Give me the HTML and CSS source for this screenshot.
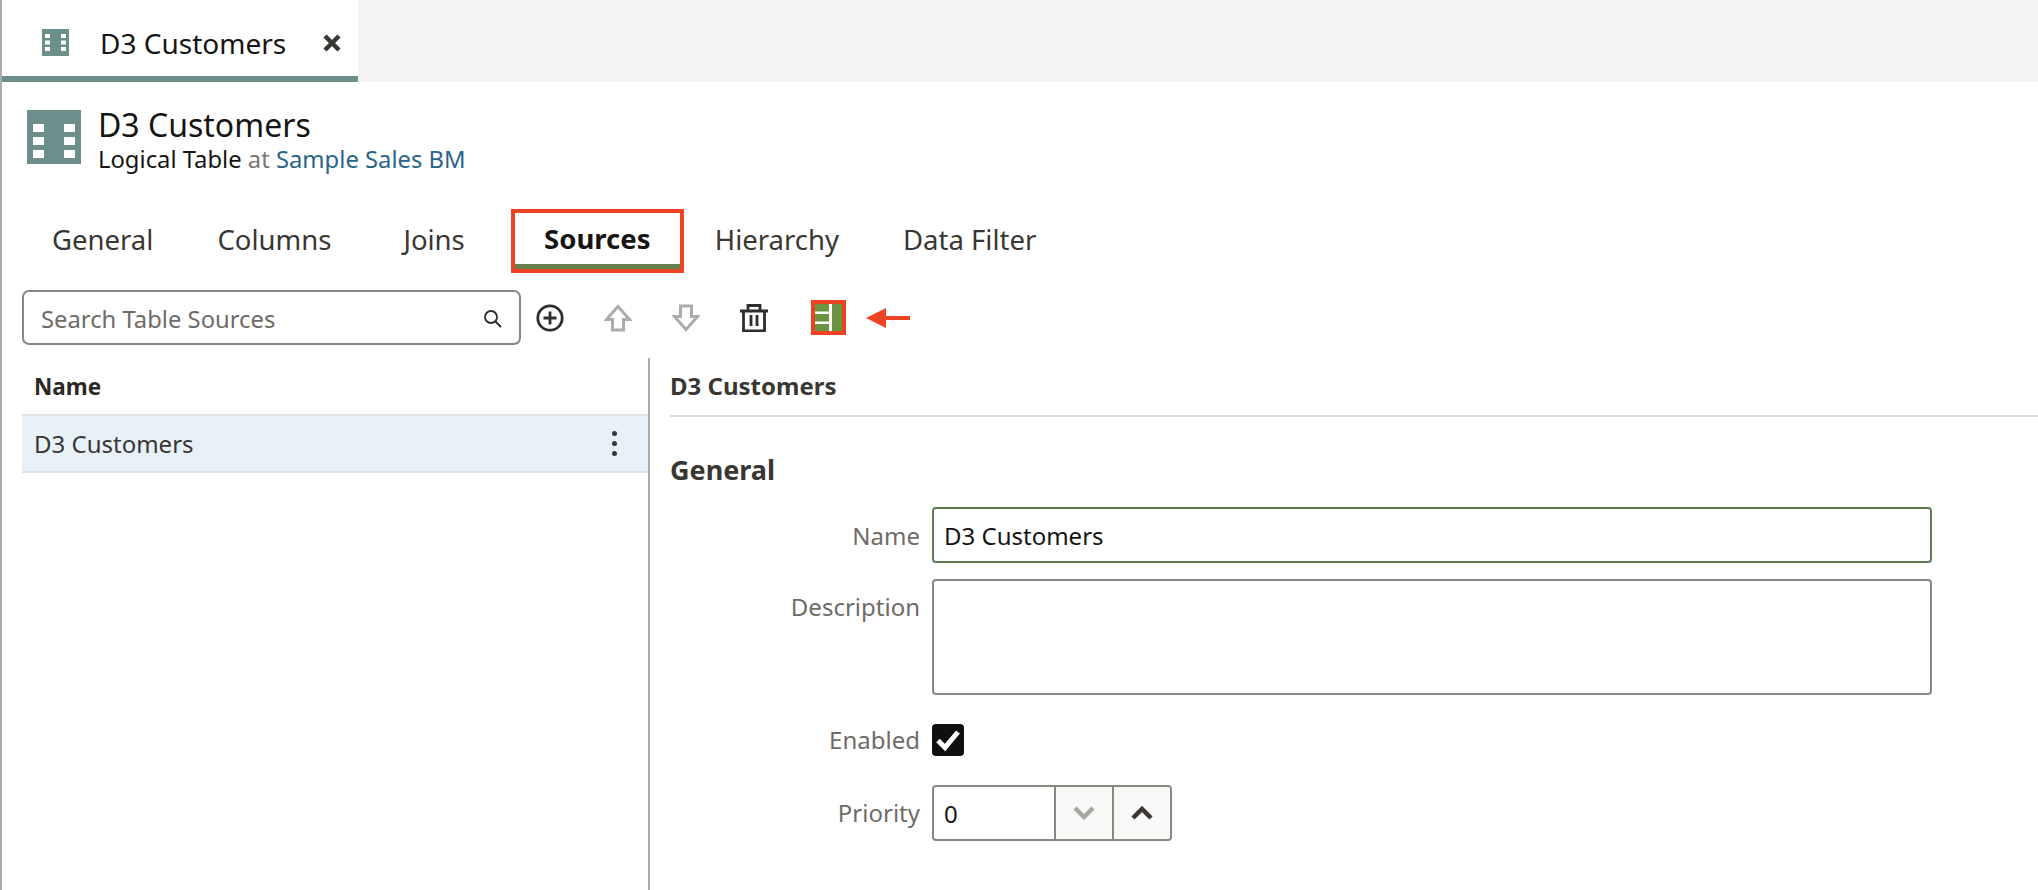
FILE: index.html
```html
<!DOCTYPE html>
<html lang="en">
<head>
    <meta charset="UTF-8">
    <meta name="viewport" content="width=device-width, initial-scale=1.0">
    <title>D3 Customers</title>
    <link rel="stylesheet" href="styles.css">
</head>
<body>
    <div class="tab-strip">
        <div class="doc-tab">
            <svg class="doc-tab-icon" viewBox="0 0 27 27"><path fill="#6d8f8c" fill-rule="evenodd" d="M0 0h27v27H0zM3 5v4h5V5zM19 5v4h5V5zM3 11.500v4h5v-4zM19 11.500v4h5v-4zM3 18v4h5v-4zM19 18v4h5v-4z"/></svg>
            <span class="doc-tab-label">D3 Customers</span>
            <svg class="doc-tab-close" viewBox="0 0 20 20"><path d="M3 3l14 14M17 3L3 17" stroke="#3a3632" stroke-width="4.500" fill="none"/></svg>
        </div>
    </div>

    <div class="page-header">
        <svg class="page-icon" viewBox="0 0 54 54"><path fill="#6d8f8c" fill-rule="evenodd" d="M0 0h54v54H0zM6 14v8h11v-8zM37 14v8h11v-8zM6 27v8h11v-8zM37 27v8h11v-8zM6 40v8h11v-8zM37 40v8h11v-8z"/></svg>
        <div class="page-text">
            <div class="page-title">D3 Customers</div>
            <div class="page-sub">Logical Table <span class="muted">at</span> <a class="link">Sample Sales BM</a></div>
        </div>
    </div>

    <nav class="tabs">
        <div class="tab tab-general">General</div>
        <div class="tab tab-columns">Columns</div>
        <div class="tab tab-joins">Joins</div>
        <div class="tab tab-active">Sources</div>
        <div class="tab tab-hierarchy">Hierarchy</div>
        <div class="tab">Data Filter</div>
    </nav>

    <div class="toolbar">
        <div class="search">
            <span>Search Table Sources</span>
            <svg class="search-icon" viewBox="0 0 20 20"><circle cx="8" cy="8" r="6" fill="none" stroke="#2e2b28" stroke-width="1.800"/><path d="M12.500 12.500L18 18" stroke="#2e2b28" stroke-width="2" fill="none"/></svg>
        </div>
        <svg class="tool tool-add" viewBox="0 0 28 28"><circle cx="14" cy="14" r="12.200" fill="none" stroke="#312d2a" stroke-width="2.800"/><path d="M14 7.500v13M7.500 14h13" stroke="#312d2a" stroke-width="2.800" fill="none"/></svg>
        <svg class="tool tool-up" viewBox="0 0 28 28"><path d="M14 2.500L2.500 15.500H8.500V26h11V15.500h6z" fill="none" stroke="#aeaca9" stroke-width="3"/></svg>
        <svg class="tool tool-down" viewBox="0 0 28 28"><path d="M14 25.500L2.500 12.500H8.500V2h11v10.500h6z" fill="none" stroke="#aeaca9" stroke-width="3"/></svg>
        <svg class="tool tool-trash" viewBox="0 0 28 28"><path d="M0 7h28M8 7V1.500h12V7M3.500 7v20h21V7M11 11v11M17 11v11" fill="none" stroke="#312d2a" stroke-width="2.800"/></svg>
        <div class="split-btn">
            <svg viewBox="0 0 27 27"><path fill="#6b9440" d="M0 0h14v7.500H0zM0 10h14v7.500H0zM0 20h14v7H0zM17 0h10v27H17z"/></svg>
        </div>
        <svg class="red-arrow" viewBox="0 0 44 20"><path fill="#ee4323" d="M0 10L20 0v8h24v4H20v8z"/></svg>
    </div>

    <div class="main">
        <div class="list-panel">
            <div class="list-head">Name</div>
            <div class="list-row">
                <span>D3 Customers</span>
                <div class="dots"><i></i><i></i><i></i></div>
            </div>
        </div>
        <div class="detail-panel">
            <div class="detail-head">D3 Customers</div>
            <h2 class="section-title">General</h2>
            <div class="form">
                <label class="form-label">Name</label>
                <div class="field field-active">D3 Customers</div>
                <label class="form-label label-top">Description</label>
                <div class="field field-area"></div>
                <label class="form-label label-tight">Enabled</label>
                <div class="checkbox">
                    <svg viewBox="0 0 32 32"><path d="M6 16.500l7 7L26 8" fill="none" stroke="#fff" stroke-width="5"/></svg>
                </div>
                <label class="form-label label-tight">Priority</label>
                <div class="spinner">
                    <span class="spinner-value">0</span>
                    <div class="spinner-btn"><svg viewBox="0 0 22 14"><path d="M2 2l9 9 9-9" fill="none" stroke="#a8a6a3" stroke-width="4.500"/></svg></div>
                    <div class="spinner-btn"><svg viewBox="0 0 22 14"><path d="M2 12l9-9 9 9" fill="none" stroke="#3a3632" stroke-width="4.500"/></svg></div>
                </div>
            </div>
        </div>
    </div>
</body>
</html>
```

FILE: styles.css
```css
* {
    box-sizing: border-box;
}

html, body {
    height: 100%;
}

body {
    margin: 0;
    display: flex;
    flex-direction: column;
    overflow: hidden;
    background: #fff;
    border-left: 2px solid #aeaaa6;
    color: #161513;
    font-family: "Noto Sans", "Open Sans", sans-serif;
}

.tab-strip {
    height: 82px;
    flex: none;
    background: #f5f4f2;
}

.doc-tab {
    width: 356px;
    height: 82px;
    display: flex;
    align-items: center;
    padding: 9px 16px 0 40px;
    background: #fff;
    border-bottom: 6px solid #6d8f8c;
}

.doc-tab-icon {
    width: 27px;
    height: 27px;
}

.doc-tab-label {
    margin-left: 31px;
    font-size: 28px;
}

.doc-tab-close {
    width: 20px;
    height: 20px;
    margin-left: auto;
}

.page-header {
    display: flex;
    gap: 17px;
    margin: 28px 0 0 25px;
    height: 54px;
    flex: none;
}

.page-icon {
    width: 54px;
    height: 54px;
}

.page-text {
    margin-top: -1px;
}

.page-title {
    font-size: 32px;
    line-height: 32px;
}

.page-sub {
    font-size: 23.800px;
    line-height: 36px;
}

.muted {
    color: #7a7672;
}

.link {
    color: #2a6489;
}

.tabs {
    display: flex;
    height: 64px;
    margin-top: 45px;
    padding-left: 50px;
    flex: none;
    font-size: 27.500px;
    color: #3a3632;
}

.tab {
    display: flex;
    align-items: center;
    height: 64px;
    padding-bottom: 4px;
}

.tab-general {
    margin-right: 64px;
}

.tab-columns {
    margin-right: 72px;
}

.tab-joins {
    margin-right: 46px;
}

.tab-hierarchy {
    margin-right: 64px;
}

.tab-active {
    width: 173px;
    margin-right: 31px;
    justify-content: center;
    padding-bottom: 5px;
    border: 4px solid #ee4323;
    background: linear-gradient(#667f4f, #667f4f) bottom / 100% 5px no-repeat;
    color: #161513;
    font-weight: 700;
}

.toolbar {
    display: flex;
    align-items: center;
    height: 55px;
    margin-top: 17px;
    padding-left: 20px;
    flex: none;
}

.search {
    width: 499px;
    height: 55px;
    display: flex;
    align-items: center;
    justify-content: space-between;
    padding: 2px 16px 0 17px;
    border: 2px solid #8a8680;
    border-radius: 7px;
    color: #6f6b67;
    font-size: 23.800px;
}

.search-icon {
    width: 20px;
    height: 20px;
}

.tool {
    width: 28px;
    height: 28px;
    flex: none;
}

.tool-add {
    margin-left: 15px;
}

.tool-up {
    margin-left: 40px;
}

.tool-down {
    margin-left: 40px;
}

.tool-trash {
    margin-left: 40px;
}

.split-btn {
    width: 35px;
    height: 35px;
    margin-left: 43px;
    padding: 0;
    border: 4px solid #ee4323;
}

.split-btn svg {
    display: block;
    width: 27px;
    height: 27px;
}

.red-arrow {
    width: 44px;
    height: 20px;
    margin-left: 20px;
}

.main {
    display: flex;
    flex: 1;
    min-height: 0;
    margin-top: 13px;
}

.list-panel {
    width: 648px;
    padding-left: 20px;
    border-right: 2px solid #aeaaa6;
    flex: none;
}

.list-head {
    height: 56px;
    padding: 11px 0 0 12px;
    font-size: 22.500px;
    line-height: 36px;
    font-weight: 700;
    color: #2b2825;
}

.list-row {
    height: 59px;
    display: flex;
    align-items: center;
    justify-content: space-between;
    padding: 0 31px 0 12px;
    background: #e8f1f8;
    border-top: 2px solid #e0e2e2;
    border-bottom: 2px solid #e0e2e2;
    font-size: 24px;
    color: #3a3632;
}

.dots {
    display: flex;
    flex-direction: column;
    gap: 5px;
}

.dots i {
    width: 5px;
    height: 5px;
    border-radius: 50%;
    background: #3a3632;
}

.detail-panel {
    flex: 1;
    padding-left: 20px;
}

.detail-head {
    height: 59px;
    padding-top: 10px;
    border-bottom: 2px solid #dddcda;
    font-size: 24px;
    line-height: 36px;
    font-weight: 700;
    color: #3a3632;
}

.section-title {
    margin: 35px 0 0;
    font-size: 27px;
    line-height: 36px;
    font-weight: 700;
    color: #3a3632;
}

.form {
    display: grid;
    grid-template-columns: 250px 1000px;
    column-gap: 12px;
    row-gap: 16px;
    align-items: center;
    margin-top: 19px;
}

.form-label {
    text-align: right;
    font-size: 24px;
    color: #6f6b67;
}

.label-top {
    align-self: start;
    margin-top: 11px;
}

.label-tight {
    padding-bottom: 2px;
}

.field {
    display: flex;
    align-items: center;
    height: 56px;
    padding: 0 10px;
    border: 2px solid #8a8680;
    border-radius: 4px;
    font-size: 24px;
}

.field-active {
    border-color: #5f7d4f;
}

.field-area {
    height: 116px;
}

.checkbox {
    width: 32px;
    height: 32px;
    margin: 13px 0;
    background: #100f0e;
    border-radius: 4px;
}

.checkbox svg {
    display: block;
    width: 32px;
    height: 32px;
}

.spinner {
    width: 240px;
    height: 56px;
    display: flex;
    border: 2px solid #8a8680;
    border-radius: 4px;
    overflow: hidden;
}

.spinner-value {
    flex: 1;
    display: flex;
    align-items: center;
    padding-left: 10px;
    font-size: 24px;
}

.spinner-btn {
    width: 58px;
    display: flex;
    align-items: center;
    justify-content: center;
    background: #fbf9f8;
    border-left: 2px solid #8a8680;
}

.spinner-btn svg {
    width: 22px;
    height: 14px;
}
```
